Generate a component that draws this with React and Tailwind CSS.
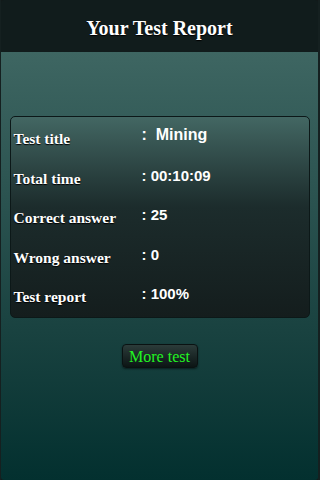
import React from 'react';

const rows = [
  { label: 'Test title', value: ':  Mining', big: true },
  { label: 'Total time', value: ': 00:10:09' },
  { label: 'Correct answer', value: ': 25' },
  { label: 'Wrong answer', value: ': 0' },
  { label: 'Test report', value: ': 100%' },
];

function App() {
  return (
    <div className="w-[320px] h-[480px] flex flex-col bg-[#141a1a] border-l border-r-2 border-[#152020]">
      {/* Header */}
      <div className="h-[52px] shrink-0 flex items-center justify-center bg-[#111c1c] rounded-t-[3px]">
        <h1
          className="text-[20px] font-bold text-white mt-[4px]"
          style={{ fontFamily: '"Liberation Serif", serif', textShadow: '0 1px 1px #000' }}
        >
          Your Test Report
        </h1>
      </div>

      {/* Body */}
      <div className="flex-1 flex flex-col items-center bg-gradient-to-b from-[#3e6662] to-[#03302f] rounded-b-[3px]">
        <div className="mt-[64px] w-[300px] h-[202px] rounded-[5px] border border-[#0c1818] bg-gradient-to-b from-[#436763] via-[#1c2c2c] via-45% to-[#141d1d] pt-[2px] px-[3px]">
          {rows.map((row) => (
            <div key={row.label} className="h-[39.5px] flex items-center">
              <span
                className="w-[128px] text-[15.5px] font-bold text-white"
                style={{ fontFamily: '"Liberation Serif", serif', textShadow: '0 1px 1px #000' }}
              >
                {row.label}
              </span>
              <span
                className={
                  row.big
                    ? 'text-[16px] font-bold text-white mb-[8px] whitespace-pre'
                    : 'text-[15px] font-bold text-white mb-[5px] whitespace-pre'
                }
                style={{ fontFamily: '"Liberation Sans", Arial, sans-serif' }}
              >
                {row.value}
              </span>
            </div>
          ))}
        </div>

        <button
          className="mt-[26px] w-[76px] h-[24px] rounded-[4px] border border-[#0a1212] bg-gradient-to-b from-[#2c3c3a] to-[#0c1515] text-[16px] text-[#22f522] shadow-[0_1px_2px_rgba(0,0,0,0.5)]"
          style={{ fontFamily: '"Liberation Serif", serif' }}
        >
          More test
        </button>
      </div>
    </div>
  );
}

export default App;
